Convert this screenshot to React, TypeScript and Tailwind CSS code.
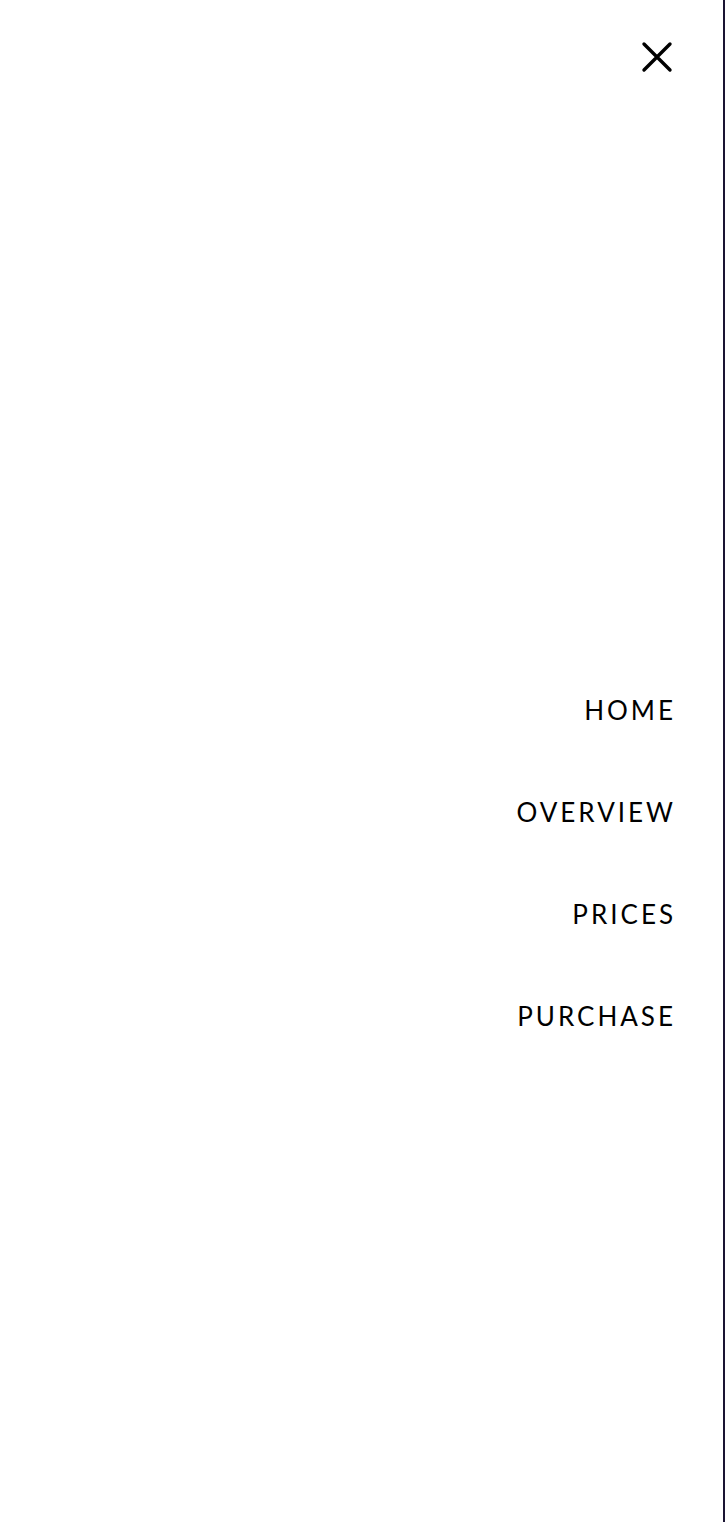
const links = ["HOME", "OVERVIEW", "PRICES", "PURCHASE"];

export default function App() {
	return (
		<div className="flex min-h-[1522px] w-full bg-white">
			<nav className="flex w-[725px] flex-col border-r-2 border-[#1a1433] bg-white">
				<div className="flex justify-end pr-[50px] pt-[41px]">
					<button type="button" aria-label="Close menu" className="text-black">
						<svg width="32" height="32" viewBox="0 0 32 32" fill="none" stroke="currentColor" strokeWidth="3.4" strokeLinecap="round">
							<path d="M3 3 29 29M29 3 3 29" />
						</svg>
					</button>
				</div>
				<ul className="mt-[619px] flex flex-col items-end gap-[66px] pr-[50px] font-['Lato',sans-serif] text-[26px] leading-[36px] tracking-[3px] text-black">
					{links.map((label) => (
						<li key={label}>
							<a href="#" className="mr-[-3px]">
								{label}
							</a>
						</li>
					))}
				</ul>
			</nav>
		</div>
	);
}
